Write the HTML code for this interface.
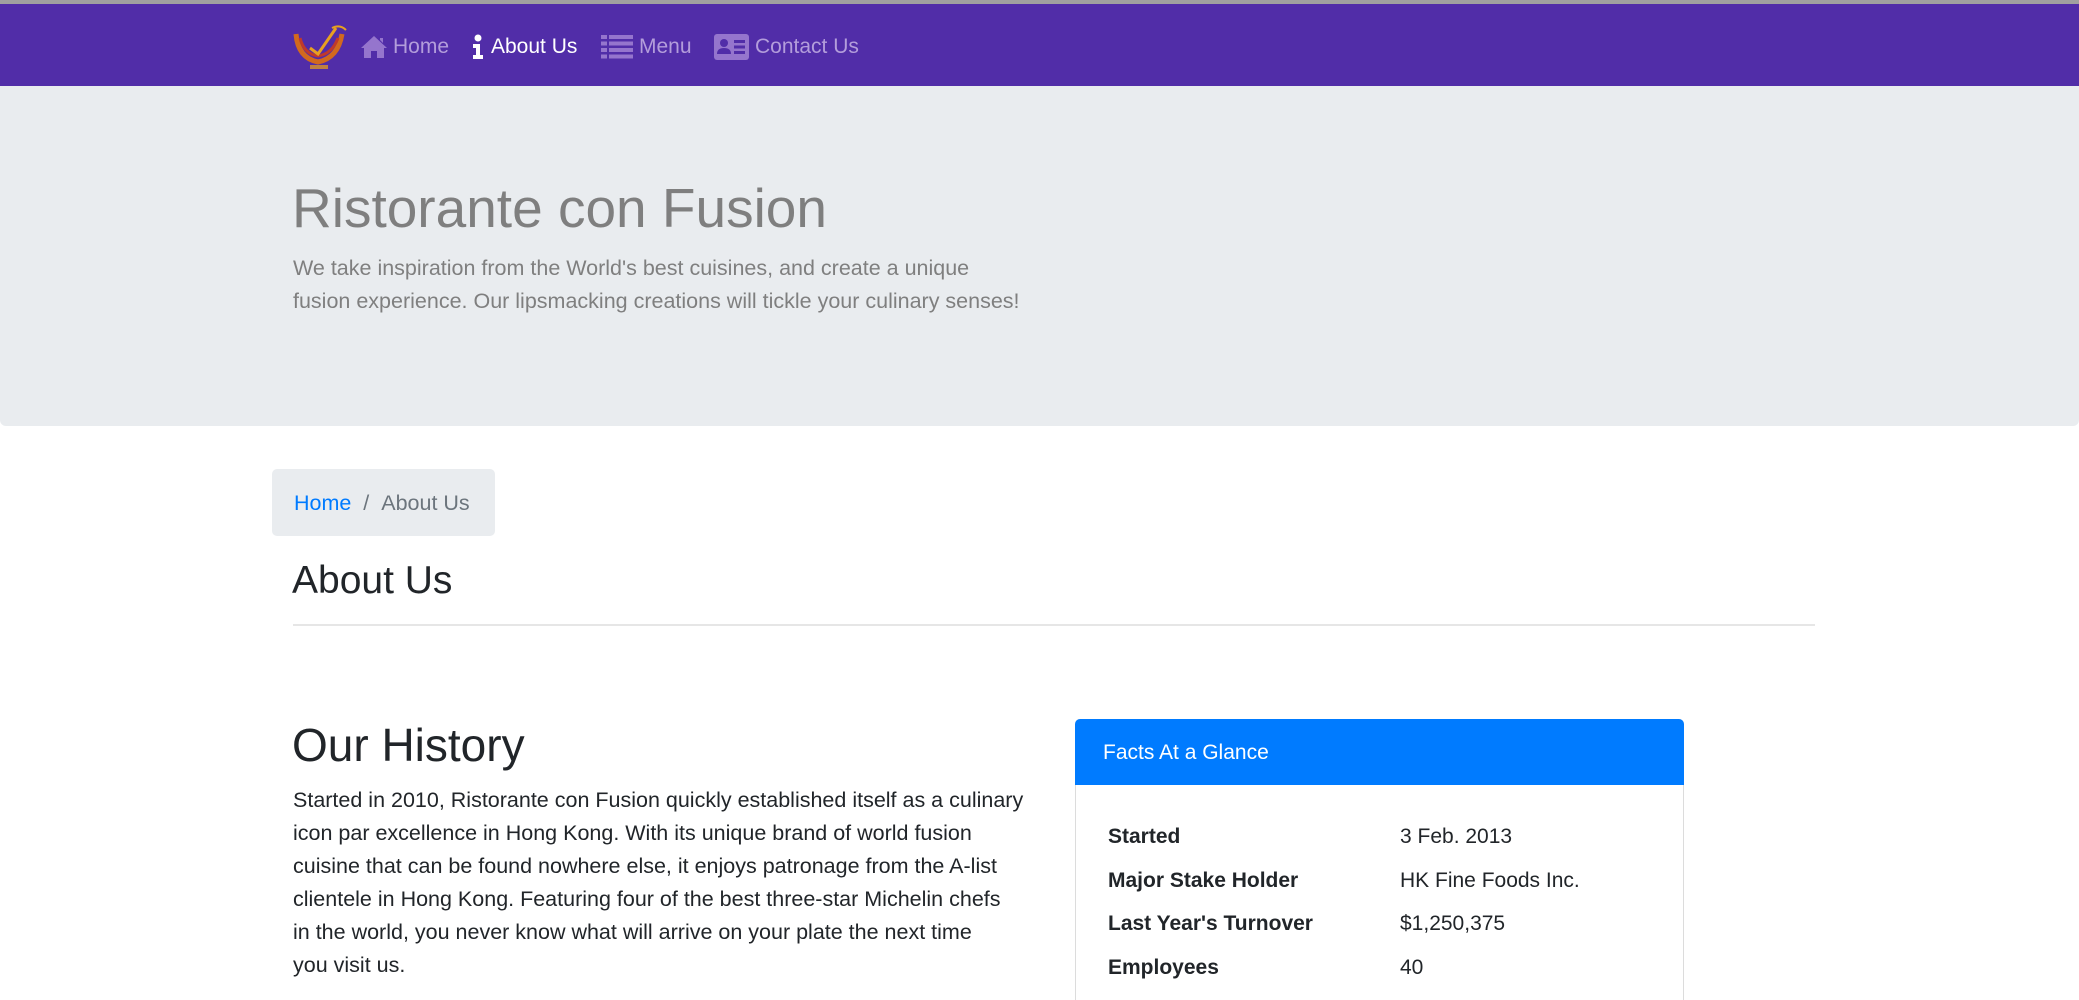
<!DOCTYPE html>
<html style="width:2079px;height:1000px;overflow:hidden"><head><meta charset="utf-8"><style>
*{box-sizing:border-box;margin:0;padding:0}
body{width:2079px;height:1000px;overflow:hidden;background:#fff;font-family:"Liberation Sans",sans-serif;color:#212529;position:relative}
.abs{position:absolute;white-space:nowrap}
.topline{position:absolute;left:0;top:0;width:2079px;height:4px;background:#a0a0a0}
.nav{position:absolute;left:0;top:4px;width:2079px;height:82px;background:#512DA8}
.nl{position:absolute;top:31px;font-size:21px;color:#b39ddb;line-height:24px}
.jum{position:absolute;left:0;top:86px;width:2079px;height:340px;background:#e9ecef;border-radius:0 0 6px 6px}
p.l{font-size:21.5px;line-height:33px;white-space:nowrap}
</style></head><body>
<div class="topline"></div>
<div class="nav">
 <svg class="abs" style="left:292px;top:20px" width="56" height="48" viewBox="0 0 56 48">
  <path d="M4 10 Q6 34 26 38 Q46 34 50 10" fill="none" stroke="#d2691e" stroke-width="5"/>
  <path d="M8 14 Q12 30 26 32 Q40 30 46 14" fill="none" stroke="#c0392b" stroke-width="3"/>
  <path d="M18 24 L26 30 L44 4" fill="none" stroke="#e8a020" stroke-width="3"/>
  <path d="M40 4 Q48 0 54 6" fill="none" stroke="#e8a020" stroke-width="2"/>
  <rect x="18" y="41" width="18" height="4" fill="#c08040"/>
 </svg>
 <svg class="abs" style="left:360px;top:31px" width="28" height="24" viewBox="0 0 28 24"><path d="M14 1 L1 13 L4 13 L4 23 L11 23 L11 16 L17 16 L17 23 L24 23 L24 13 L27 13 Z M20 3 L23 3 L23 8 L20 5Z" fill="#9575cd"/></svg>
 <div class="nl" style="left:393px">Home</div>
 <svg class="abs" style="left:472px;top:30px" width="12" height="26" viewBox="0 0 12 26"><circle cx="6" cy="4" r="3.5" fill="#fff"/><path d="M1 10 H8 V21 H11 V25 H1 V21 H4 V14 H1Z" fill="#fff"/></svg>
 <div class="nl" style="left:491px;color:#fff">About Us</div>
 <svg class="abs" style="left:601px;top:31px" width="32" height="24" viewBox="0 0 32 24"><g fill="#9575cd"><rect x="0" y="0" width="6" height="4"/><rect x="8" y="0" width="24" height="4"/><rect x="0" y="6.5" width="6" height="4"/><rect x="8" y="6.5" width="24" height="4"/><rect x="0" y="13" width="6" height="4"/><rect x="8" y="13" width="24" height="4"/><rect x="0" y="19.5" width="6" height="4"/><rect x="8" y="19.5" width="24" height="4"/></g></svg>
 <div class="nl" style="left:639px">Menu</div>
 <svg class="abs" style="left:714px;top:30px" width="35" height="26" viewBox="0 0 35 26"><rect x="0" y="0" width="35" height="26" rx="3" fill="#9575cd"/><circle cx="10" cy="9" r="4" fill="#512DA8"/><path d="M3 20 Q3 14 10 14 Q17 14 17 20Z" fill="#512DA8"/><rect x="20" y="6" width="11" height="3" fill="#512DA8"/><rect x="20" y="11.5" width="11" height="3" fill="#512DA8"/><rect x="20" y="17" width="11" height="3" fill="#512DA8"/></svg>
 <div class="nl" style="left:755px">Contact Us</div>
</div>
<div class="jum">
 <div class="abs" style="left:292px;top:90px;font-size:55px;line-height:64px;color:#7f7f7f">Ristorante con Fusion</div>
 <p class="l abs" style="left:293px;top:166px;color:#7f7f7f">We take inspiration from the World's best cuisines, and create a unique<br>fusion experience. Our lipsmacking creations will tickle your culinary senses!</p>
</div>
<div class="abs" style="left:272px;top:469px;width:223px;height:67px;background:#e9ecef;border-radius:5px"></div>
<div class="abs" style="left:294px;top:491px;font-size:21.5px;color:#6c757d"><span style="color:#007bff">Home</span>&nbsp; / &nbsp;About Us</div>
<div class="abs" style="left:292px;top:558px;font-size:39px;line-height:46px">About Us</div>
<div class="abs" style="left:293px;top:624px;width:1522px;height:2px;background:#e6e6e6"></div>
<div class="abs" style="left:292px;top:718px;font-size:46px;line-height:54px">Our History</div>
<p class="l abs" style="left:293px;top:784px">Started in 2010, Ristorante con Fusion quickly established itself as a culinary<br>icon par excellence in Hong Kong. With its unique brand of world fusion<br>cuisine that can be found nowhere else, it enjoys patronage from the A-list<br>clientele in Hong Kong. Featuring four of the best three-star Michelin chefs<br>in the world, you never know what will arrive on your plate the next time<br>you visit us.</p>
<div class="abs" style="left:1075px;top:719px;width:609px;height:281px;border:1px solid #dcdcdc;border-bottom:none;border-radius:5px 5px 0 0"></div>
<div class="abs" style="left:1075px;top:719px;width:609px;height:66px;background:#007bff;border-radius:5px 5px 0 0"></div>
<div class="abs" style="left:1103px;top:741px;font-size:21px;color:#fff">Facts At a Glance</div>
<div class="abs" style="left:1108px;top:815px;font-size:21px;line-height:43.7px;font-weight:bold">Started<br>Major Stake Holder<br>Last Year's Turnover<br>Employees</div>
<div class="abs" style="left:1400px;top:815px;font-size:21px;line-height:43.7px">3 Feb. 2013<br>HK Fine Foods Inc.<br>$1,250,375<br>40</div>
</body></html>
